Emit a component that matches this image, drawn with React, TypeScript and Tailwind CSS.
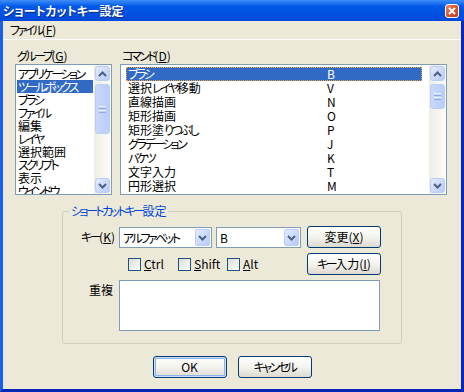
import type { ReactNode } from 'react';

const groups = ['アプリケーション', 'ツールボックス', 'ブラシ', 'ファイル', '編集', 'レイヤ', '選択範囲', 'スクリプト', '表示', 'ウインドウ'];

const commands: [string, string][] = [
  ['ブラシ', 'B'],
  ['選択レイヤ移動', 'V'],
  ['直線描画', 'N'],
  ['矩形描画', 'O'],
  ['矩形塗りつぶし', 'P'],
  ['グラデーション', 'J'],
  ['バケツ', 'K'],
  ['文字入力', 'T'],
  ['円形選択', 'M'],
];

// kana in the old bitmap UI font are proportional, so tighten them up
function J({ t }: { t: string }) {
  return (
    <>
      {t.split(/([\u3040-\u30ff]+)/).map((s, i) =>
        /[\u3040-\u30ff]/.test(s) ? (
          <span key={i} className="inline-block tracking-[-2.5px]">
            {s}
          </span>
        ) : (
          s
        )
      )}
    </>
  );
}

function Arrow({ dir }: { dir: 'up' | 'down' }) {
  return (
    <svg width="9" height="6" viewBox="0 0 9 6">
      <path
        d={dir === 'up' ? 'M1 5 L4.5 1.5 L8 5' : 'M1 1 L4.5 4.5 L8 1'}
        stroke="#4d6185"
        strokeWidth="2"
        fill="none"
      />
    </svg>
  );
}

function ScrollBtn({ dir }: { dir: 'up' | 'down' }) {
  return (
    <div className="h-[17px] w-[17px] p-[1px] shrink-0">
      <div className="h-full w-full rounded-[3px] border border-[#bccdf5] bg-linear-to-br from-[#e4ecfe] to-[#b6cafa] flex items-center justify-center">
        <Arrow dir={dir} />
      </div>
    </div>
  );
}

function ScrollBar({ thumb }: { thumb: string }) {
  return (
    <div className="w-[17px] h-full flex flex-col bg-linear-to-r from-[#eeede5] to-[#fcfcf9]">
      <ScrollBtn dir="up" />
      <div className={`mt-[2px] px-[1px] shrink-0 ${thumb}`}>
        <div className="h-full rounded-[3px] border border-[#bccdf5] bg-linear-to-r from-[#c9d8fc] to-[#b9cdfa] flex flex-col items-center justify-center gap-[1px]">
          <div className="h-[1px] w-[7px] bg-[#eef4fe]" />
          <div className="h-[1px] w-[7px] bg-[#8eaaef]" />
          <div className="h-[1px] w-[7px] bg-[#eef4fe]" />
          <div className="h-[1px] w-[7px] bg-[#8eaaef]" />
        </div>
      </div>
      <div className="flex-1" />
      <ScrollBtn dir="down" />
    </div>
  );
}

function Btn({ children, def }: { children: ReactNode; def?: boolean }) {
  return (
    <div
      className={
        'w-[74px] h-[22px] rounded-[3px] border border-[#003c74] bg-linear-to-b from-white via-[#f4f3ee] to-[#dcdad0] flex items-center justify-center ' +
        (def ? 'shadow-[inset_0_0_0_1px_#cfe0fc,inset_0_0_0_2px_#8fb0ee]' : '')
      }
    >
      {children}
    </div>
  );
}

function Combo({ value, w }: { value: string; w: string }) {
  return (
    <div className={`${w} h-[21px] border border-[#7f9db9] bg-white flex items-center`}>
      <span className="flex-1 pl-[3px] whitespace-nowrap">
        <J t={value} />
      </span>
      <div className="h-[19px] w-[17px] p-[1px] shrink-0">
        <div className="h-full w-full rounded-[2px] border border-[#bccdf5] bg-linear-to-br from-[#e4ecfe] to-[#b6cafa] flex items-center justify-center">
          <Arrow dir="down" />
        </div>
      </div>
    </div>
  );
}

function Check({ children, w }: { children: ReactNode; w: string }) {
  return (
    <div className={`${w} flex items-center gap-[3px]`}>
      <div className="w-[13px] h-[13px] border border-[#1c5180] bg-linear-to-br from-[#dcdcd4] to-white" />
      <span>{children}</span>
    </div>
  );
}

export default function App() {
  return (
    <div className="w-[464px] h-[392px] flex flex-col text-[12px] leading-[12px] text-black font-['Noto_Sans_CJK_JP','Liberation_Sans',sans-serif] [font-feature-settings:'palt'_1]">
      {/* title bar */}
      <div className="h-[21px] shrink-0 flex items-center justify-between pl-[3px] pr-[5px] bg-linear-to-b from-[#3d8ef8] via-[#0058e8] via-30% to-[#0049da]">
        <span className="font-bold text-white pt-[1px] [text-shadow:1px_1px_0_#0a2a8a]">ショートカットキー設定</span>
        <div className="w-[14px] h-[14px] rounded-[3px] border border-white bg-linear-to-br from-[#eb8b6b] via-[#d9532f] to-[#c03d1c] flex items-center justify-center">
          <svg width="8" height="8" viewBox="0 0 8 8">
            <path d="M1 1L7 7M7 1L1 7" stroke="white" strokeWidth="2" />
          </svg>
        </div>
      </div>

      <div className="flex-1 flex flex-col bg-[#ece9d8] border-l-[3px] border-r-[3px] border-b-[3px] border-l-[#1a5ff0] border-r-[#0628c0] border-b-[#0626b5]">
        {/* menu */}
        <div className="h-[19px] shrink-0 flex items-center pl-[7px] border-b border-white">
          <span>
            <J t="ファイル" />(<u className="underline-offset-[1px]">F</u>)
          </span>
        </div>

        {/* lists */}
        <div className="flex pt-[10px] pl-[12px] gap-[8px]">
          <div className="w-[97px]">
            <div className="h-[14px] pl-[2px]">
              <J t="グループ" />(<u className="underline-offset-[1px]">G</u>)
            </div>
            <div className="h-[131px] border border-[#7f9db9] bg-white flex">
              <div className="flex-1 pt-[2px] px-[1px] overflow-hidden">
                {groups.map((g, i) => (
                  <div
                    key={g}
                    className={
                      'h-[13px] leading-[13px] pl-[1px] whitespace-nowrap ' +
                      (i === 1 ? 'bg-[#316ac5] text-white' : '')
                    }
                  >
                    <J t={g} />
                  </div>
                ))}
              </div>
              <ScrollBar thumb="h-[50px]" />
            </div>
          </div>

          <div className="w-[327px]">
            <div className="h-[14px] pl-[2px]">
              <J t="コマンド" />(<u className="underline-offset-[1px]">D</u>)
            </div>
            <div className="h-[131px] border border-[#7f9db9] bg-white flex">
              <div className="flex-1 pt-[2px] pl-[5px] pr-[7px] overflow-hidden">
                {commands.map(([name, key], i) => (
                  <div
                    key={name}
                    className={
                      'h-[14px] leading-[14px] flex whitespace-nowrap ' +
                      (i === 0
                        ? 'bg-[#316ac5] text-white outline-1 outline-dotted outline-[#f4a63a] -outline-offset-1'
                        : '')
                    }
                  >
                    <span className="w-[201px] pl-[2px]">
                      <J t={name} />
                    </span>
                    <span>{key}</span>
                  </div>
                ))}
              </div>
              <ScrollBar thumb="h-[25px]" />
            </div>
          </div>
        </div>

        {/* shortcut group box */}
        <div className="relative ml-[59px] mt-[16px] w-[340px] h-[133px] border border-[#d0d0bf] rounded-[3px]">
          <span className="absolute top-[-7px] left-[6px] px-[2px] bg-[#ece9d8] text-[#0046d5]">
            <J t="ショートカットキー設定" />
          </span>

          <div className="mt-[14px] flex items-start">
            <div className="w-[52px] mt-[5px] text-right">
              <J t="キー" />(<u className="underline-offset-[1px]">K</u>)
            </div>
            <div className="ml-[4px] mt-[1px]">
              <Combo value="アルファベット" w="w-[93px]" />
            </div>
            <div className="ml-[4px] mt-[1px]">
              <Combo value="B" w="w-[85px]" />
            </div>
            <div className="ml-[6px]">
              <Btn>
                変更(<u className="underline-offset-[1px]">X</u>)
              </Btn>
            </div>
          </div>

          <div className="mt-[5px] h-[22px] flex items-center pl-[65px]">
            <Check w="w-[50px]">
              <u className="underline-offset-[1px]">C</u>trl
            </Check>
            <Check w="w-[49px]">
              <u className="underline-offset-[1px]">S</u>hift
            </Check>
            <Check w="w-[80px]">
              <u className="underline-offset-[1px]">A</u>lt
            </Check>
            <Btn>
              <J t="キー" />入力(<u className="underline-offset-[1px]">I</u>)
            </Btn>
          </div>

          <div className="mt-[5px] flex items-start">
            <div className="w-[50px] mt-[4px] text-right">重複</div>
            <div className="ml-[6px] w-[261px] h-[51px] border border-[#7f9db9] bg-white" />
          </div>
        </div>

        {/* dialog buttons */}
        <div className="mt-[12px] flex justify-center gap-[11px]">
          <Btn def>OK</Btn>
          <Btn>
            <J t="キャンセル" />
          </Btn>
        </div>
      </div>
    </div>
  );
}
